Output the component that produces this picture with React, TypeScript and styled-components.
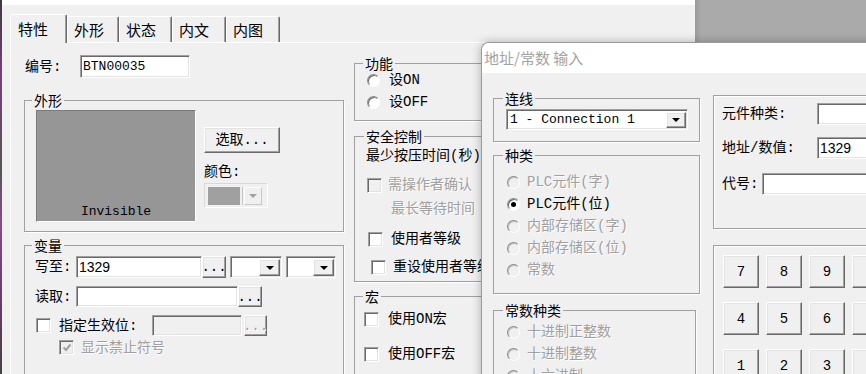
import React from 'react';
import styled, { createGlobalStyle, css } from 'styled-components';

const MONO_CJK = `"Liberation Mono", "Noto Sans CJK SC", monospace`;

const GlobalStyle = createGlobalStyle`
  html, body { margin: 0; padding: 0; background: #f0f0f0; }
  body { font-family: ${MONO_CJK}; font-size: 14px; color: #000; }
  * { box-sizing: border-box; }
`;

const sunken = css`
  border: 1px solid;
  border-color: #a0a0a0 #fff #fff #a0a0a0;
  box-shadow: inset 1px 1px 0 #696969, inset -1px -1px 0 #e3e3e3;
`;

const raised = css`
  border: 1px solid;
  border-color: #fff #696969 #696969 #fff;
  box-shadow: inset -1px -1px 0 #a0a0a0, inset 1px 1px 0 #e3e3e3;
  background: #f0f0f0;
`;

const Screen = styled.div`
  position: relative;
  width: 866px;
  height: 374px;
  overflow: hidden;
  display: flex;
  background: #aaa;
`;

const DesktopEdge = styled.div`
  width: 2px;
  flex: none;
  background: linear-gradient(#3c3c3c, #7a3f7a 20%, #555 45%, #8a4a8a 60%, #6a3a6a 80%, #444);
`;

const Desktop = styled.div`
  flex: 1;
  background: linear-gradient(90deg, #9a9a9a, #aaa 6px);
`;

const BackWindow = styled.div`
  width: 693px;
  flex: none;
  display: flex;
  flex-direction: column;
  background: #f0f0f0;
`;

const TopStrip = styled.div`
  height: 5px;
  flex: none;
  background: #fff;
`;

const TabBar = styled.div`
  height: 37px;
  flex: none;
  display: flex;
  align-items: flex-end;
  padding-left: 8px;
`;

const Tab = styled.div<{ $active?: boolean; $w: number }>`
  position: relative;
  z-index: ${p => (p.$active ? 2 : 1)};
  width: ${p => p.$w}px;
  height: ${p => (p.$active ? 29 : 26)}px;
  margin-bottom: ${p => (p.$active ? -1 : 0)}px;
  padding-left: ${p => (p.$active ? 7 : 6)}px;
  border: 1px solid;
  border-bottom: none;
  border-color: #fff #696969 #fff #fff;
  border-radius: 2px 2px 0 0;
  box-shadow: inset -1px 0 0 #a0a0a0;
  background: #f0f0f0;
  font-family: "Noto Sans CJK SC", sans-serif;
  font-size: 15px;
  line-height: ${p => (p.$active ? 27 : 25)}px;
`;

const Panel = styled.div`
  flex: 1;
  min-height: 0;
  margin-left: 8px;
  border-left: 1px solid #fff;
  border-top: 1px solid #fff;
  padding-left: 13px;
  display: flex;
  gap: 10px;
`;

const LeftCol = styled.div`
  width: 320px;
  flex: none;
  display: flex;
  flex-direction: column;
`;

const RightCol = styled.div`
  flex: 1;
  display: flex;
  flex-direction: column;
`;

const Group = styled.fieldset<{ $w?: number; $mt?: number; $h?: number }>`
  margin: ${p => p.$mt ?? 0}px 0 0 0;
  padding: 0;
  min-width: 0;
  width: ${p => (p.$w ? `${p.$w}px` : 'auto')};
  ${p => p.$h && `height: ${p.$h}px;`}
  flex: none;
  border: 1px solid #a0a0a0;
  box-shadow: 1px 1px 0 #fff;
`;

const Legend = styled.legend<{ $ml?: number }>`
  margin-left: ${p => p.$ml ?? 7}px;
  padding: 0 2px;
  line-height: 16px;
  font-family: "Noto Sans CJK SC", sans-serif;
  font-size: 14px;
`;

const GroupBody = styled.div<{ $pl?: number; $pt?: number; $pb?: number }>`
  display: flex;
  flex-direction: column;
  padding: ${p => p.$pt ?? 0}px 0 ${p => p.$pb ?? 0}px ${p => p.$pl ?? 0}px;
`;

const Row = styled.div<{ $mt?: number; $h?: number; $pl?: number }>`
  display: flex;
  align-items: center;
  margin-top: ${p => p.$mt ?? 0}px;
  height: ${p => p.$h ?? 22}px;
  padding-left: ${p => p.$pl ?? 0}px;
  flex: none;
`;

const Label = styled.span<{ $w?: number; $ml?: number; $disabled?: boolean }>`
  ${p => p.$w && `width: ${p.$w}px;`}
  flex: none;
  margin-left: ${p => p.$ml ?? 0}px;
  white-space: nowrap;
  line-height: 18px;
  color: ${p => (p.$disabled ? '#a0a0a0' : '#000')};
  ${p => p.$disabled && 'text-shadow: 1px 1px 0 #fff;'}
`;

const TextBox = styled.div<{ $w: number; $h: number; $disabled?: boolean; $sans?: boolean }>`
  ${sunken};
  width: ${p => p.$w}px;
  height: ${p => p.$h}px;
  flex: none;
  background: ${p => (p.$disabled ? '#f0f0f0' : '#fff')};
  padding-left: 2px;
  font-family: ${p => (p.$sans ? '"Liberation Sans", sans-serif' : '"Liberation Mono", monospace')};
  font-size: ${p => (p.$sans ? 14 : 13)}px;
  line-height: ${p => p.$h - 2}px;
  white-space: nowrap;
  overflow: hidden;
`;

const PushButton = styled.div<{ $w: number; $h: number; $ml?: number; $disabled?: boolean }>`
  ${raised};
  width: ${p => p.$w}px;
  height: ${p => p.$h}px;
  margin-left: ${p => p.$ml ?? 0}px;
  flex: none;
  display: flex;
  align-items: center;
  justify-content: center;
  color: ${p => (p.$disabled ? '#a0a0a0' : '#000')};
  ${p => p.$disabled && 'text-shadow: 1px 1px 0 #fff;'}
  line-height: 1;
`;

const Combo = styled.div<{ $w: number; $h: number; $ml?: number }>`
  ${sunken};
  width: ${p => p.$w}px;
  height: ${p => p.$h}px;
  margin-left: ${p => p.$ml ?? 0}px;
  flex: none;
  display: flex;
  padding: 2px 1px 1px 2px;
  background: #fff;
`;

const ComboText = styled.div`
  flex: 1;
  padding-left: 1px;
  font-family: "Liberation Mono", monospace;
  font-size: 13px;
  line-height: 15px;
  white-space: nowrap;
`;

const DropButton = styled.div<{ $w?: number; $disabled?: boolean }>`
  ${raised};
  width: ${p => p.$w ?? 19}px;
  flex: none;
  display: flex;
  align-items: center;
  justify-content: center;
  ${p => p.$disabled && 'border-color: #fff #c8c8c8 #c8c8c8 #fff; box-shadow: none;'}
`;

const Arrow = styled.span<{ $disabled?: boolean }>`
  width: 0;
  height: 0;
  border-left: 4px solid transparent;
  border-right: 4px solid transparent;
  border-top: 4px solid ${p => (p.$disabled ? '#a0a0a0' : '#000')};
`;

const ShapeBody = styled.div`
  display: flex;
  gap: 8px;
  padding: 2px 0 9px 11px;
`;

const Preview = styled.div`
  width: 160px;
  height: 112px;
  border: 1px solid;
  border-color: #7a7a7a #fff #fff #7a7a7a;
  background: #969696;
  display: flex;
  align-items: flex-end;
  justify-content: center;
  padding-bottom: 1px;
  font-family: "Liberation Mono", monospace;
  font-size: 13px;
  line-height: 16px;
`;

const ShapeSide = styled.div`
  display: flex;
  flex-direction: column;
  padding-top: 17px;
`;

const SideLabel = styled.div`
  margin-top: 10px;
  line-height: 18px;
`;

const ColorCombo = styled.div`
  width: 64px;
  height: 25px;
  margin-top: 2px;
  border: 1px solid;
  border-color: #d8d8d8 #fff #fff #d8d8d8;
  display: flex;
  padding: 3px 2px 2px 3px;
  gap: 2px;
`;

const Swatch = styled.div`
  width: 34px;
  background: #a0a0a0;
  border-right: 2px solid #f0f0f0;
  box-shadow: 1px 0 0 #c8c8c8;
`;

const Check = styled.span<{ $disabled?: boolean; $ml?: number }>`
  ${sunken};
  width: 15px;
  height: 15px;
  margin-left: ${p => p.$ml ?? 0}px;
  flex: none;
  display: flex;
  align-items: center;
  justify-content: center;
  background: ${p => (p.$disabled ? '#f0f0f0' : '#fff')};
`;

const Radio = styled.span<{ $checked?: boolean; $disabled?: boolean }>`
  position: relative;
  width: 13px;
  height: 13px;
  flex: none;
  border-radius: 50%;
  border: 1px solid;
  border-color: #8a8a8a #fff #fff #8a8a8a;
  box-shadow: inset 1px 1px 0 ${p => (p.$disabled ? '#c4c4c4' : '#696969')};
  background: ${p => (p.$disabled ? '#f0f0f0' : '#fff')};
  &::after {
    content: '';
    display: ${p => (p.$checked ? 'block' : 'none')};
    position: absolute;
    left: 3px;
    top: 3px;
    width: 5px;
    height: 5px;
    border-radius: 50%;
    background: #000;
  }
`;

const Dialog = styled.div`
  position: absolute;
  left: 481px;
  top: 42px;
  width: 400px;
  height: 340px;
  z-index: 5;
  display: flex;
  flex-direction: column;
  border-left: 1px solid #9a9a9a;
  border-top: 1px solid #9a9a9a;
  border-radius: 8px 0 0 0;
  background: #f0f0f0;
  box-shadow: 0 0 10px rgba(0, 0, 0, 0.28);
  overflow: hidden;
`;

const TitleBar = styled.div`
  height: 30px;
  flex: none;
  background: #fff;
  padding-left: 2px;
  font-family: "Noto Sans CJK SC", sans-serif;
  font-size: 15px;
  line-height: 30px;
  color: #a3a3a3;
`;

const DialogBody = styled.div`
  flex: 1;
  min-height: 0;
  display: flex;
  padding: 17px 0 0 11px;
`;

const DialogLeft = styled.div`
  width: 207px;
  flex: none;
  display: flex;
  flex-direction: column;
`;

const DialogRight = styled.div`
  flex: 1;
  margin-left: 13px;
  display: flex;
  flex-direction: column;
`;

const InfoBox = styled.div`
  height: 134px;
  flex: none;
  margin-top: 5px;
  padding-left: 8px;
  border: 1px solid #a0a0a0;
  box-shadow: 1px 1px 0 #fff, inset 1px 1px 0 #fff;
  display: flex;
  flex-direction: column;
`;

const KeyBox = styled.div`
  height: 200px;
  flex: none;
  margin-top: 16px;
  padding: 9px 0 0 9px;
  border: 1px solid #a0a0a0;
  box-shadow: inset 1px 1px 0 #fff;
  display: grid;
  grid-template-columns: repeat(4, 36px);
  grid-template-rows: repeat(3, 33px);
  align-content: start;
  column-gap: 7px;
  row-gap: 14px;
`;

const KeyButton = styled.div`
  ${raised};
  display: flex;
  align-items: center;
  justify-content: center;
  font-family: "Liberation Mono", monospace;
  font-size: 14px;
`;

const TABS = [
  { name: '特性', w: 57 },
  { name: '外形', w: 52 },
  { name: '状态', w: 53 },
  { name: '内文', w: 54 },
  { name: '内图', w: 54 },
];

const KINDS = [
  { name: 'PLC元件(字)', checked: false, disabled: true },
  { name: 'PLC元件(位)', checked: true, disabled: false },
  { name: '内部存储区(字)', checked: false, disabled: true },
  { name: '内部存储区(位)', checked: false, disabled: true },
  { name: '常数', checked: false, disabled: true },
];

const CONST_KINDS = ['十进制正整数', '十进制整数', '十六进制'];

// the fourth column is cut off by the screen edge, its captions are not visible
const KEYS = ['7', '8', '9', '', '4', '5', '6', '', '1', '2', '3', ''];

const CheckMark = () => (
  <svg width="10" height="9" viewBox="0 0 10 9">
    <path d="M1.5 4.5 L4 7 L8.5 1.5" stroke="#a0a0a0" strokeWidth="2" fill="none" />
  </svg>
);

export default function App() {
  return (
    <>
      <GlobalStyle />
      <Screen>
        <DesktopEdge />
        <BackWindow>
          <TopStrip />
          <TabBar>
            {TABS.map((t, i) => (
              <Tab key={t.name} $w={t.w} $active={i === 0}>
                {t.name}
              </Tab>
            ))}
          </TabBar>
          <Panel>
            <LeftCol>
              <Row $mt={12} $h={23}>
                <Label $w={55} $ml={1}>编号:</Label>
                <TextBox $w={110} $h={23}>BTN00035</TextBox>
              </Row>

              <Group $mt={14}>
                <Legend $ml={7}>外形</Legend>
                <ShapeBody>
                  <Preview>Invisible</Preview>
                  <ShapeSide>
                    <PushButton $w={76} $h={26}>选取...</PushButton>
                    <SideLabel>颜色:</SideLabel>
                    <ColorCombo>
                      <Swatch />
                      <DropButton $w={18} $disabled>
                        <Arrow $disabled />
                      </DropButton>
                    </ColorCombo>
                  </ShapeSide>
                </ShapeBody>
              </Group>

              <Group $mt={5} $h={160}>
                <Legend $ml={7}>变量</Legend>
                <GroupBody $pl={10}>
                  <Row $mt={3} $h={22}>
                    <Label $w={41}>写至:</Label>
                    <TextBox $w={126} $h={22} $sans>1329</TextBox>
                    <PushButton $w={24} $h={22}>...</PushButton>
                    <Combo $w={52} $h={22} $ml={4}>
                      <ComboText />
                      <DropButton $w={21}><Arrow /></DropButton>
                    </Combo>
                    <Combo $w={50} $h={22} $ml={4}>
                      <ComboText />
                      <DropButton $w={21}><Arrow /></DropButton>
                    </Combo>
                  </Row>
                  <Row $mt={8} $h={21}>
                    <Label $w={41}>读取:</Label>
                    <TextBox $w={162} $h={21} />
                    <PushButton $w={24} $h={21}>...</PushButton>
                  </Row>
                  <Row $mt={8} $h={21}>
                    <Check $ml={1} />
                    <Label $w={93} $ml={8}>指定生效位:</Label>
                    <TextBox $w={90} $h={21} $disabled />
                    <PushButton $w={23} $h={21} $ml={2} $disabled>...</PushButton>
                  </Row>
                  <Row $mt={4} $h={15} $pl={24}>
                    <Check $disabled>
                      <CheckMark />
                    </Check>
                    <Label $ml={7} $disabled>显示禁止符号</Label>
                  </Row>
                </GroupBody>
              </Group>
            </LeftCol>

            <RightCol>
              <Group $mt={12} $w={200}>
                <Legend $ml={8}>功能</Legend>
                <GroupBody $pl={12} $pb={7}>
                  <Row $mt={-2}>
                    <Radio />
                    <Label $ml={9}>设ON</Label>
                  </Row>
                  <Row>
                    <Radio />
                    <Label $ml={9}>设OFF</Label>
                  </Row>
                </GroupBody>
              </Group>

              <Group $mt={7} $w={200}>
                <Legend $ml={9}>安全控制</Legend>
                <GroupBody $pl={11} $pb={3}>
                  <Row $mt={1}>
                    <Label>最少按压时间(秒)</Label>
                  </Row>
                  <Row $mt={7}>
                    <Check $ml={1} $disabled />
                    <Label $ml={6} $disabled>需操作者确认</Label>
                  </Row>
                  <Row $mt={2} $pl={25}>
                    <Label $disabled>最长等待时间</Label>
                  </Row>
                  <Row $mt={8}>
                    <Check $ml={2} />
                    <Label $ml={8}>使用者等级</Label>
                  </Row>
                  <Row $mt={6}>
                    <Check $ml={5} />
                    <Label $ml={7}>重设使用者等级</Label>
                  </Row>
                </GroupBody>
              </Group>

              <Group $mt={6} $w={200} $h={120}>
                <Legend $ml={8}>宏</Legend>
                <GroupBody $pl={9}>
                  <Row $mt={4}>
                    <Check />
                    <Label $ml={9}>使用ON宏</Label>
                  </Row>
                  <Row $mt={13}>
                    <Check />
                    <Label $ml={9}>使用OFF宏</Label>
                  </Row>
                </GroupBody>
              </Group>
            </RightCol>
          </Panel>
        </BackWindow>
        <Desktop />

        <Dialog>
          <TitleBar>地址/常数 输入</TitleBar>
          <DialogBody>
            <DialogLeft>
              <Group $w={207}>
                <Legend $ml={9}>连线</Legend>
                <GroupBody $pl={12} $pt={3} $pb={11}>
                  <Combo $w={182} $h={21}>
                    <ComboText>1 - Connection 1</ComboText>
                    <DropButton $w={20}><Arrow /></DropButton>
                  </Combo>
                </GroupBody>
              </Group>

              <Group $mt={5} $w={207}>
                <Legend $ml={9}>种类</Legend>
                <GroupBody $pl={13} $pb={12}>
                  {KINDS.map((k, i) => (
                    <Row key={k.name} $mt={i === 0 ? 8 : 0}>
                      <Radio $checked={k.checked} $disabled={k.disabled} />
                      <Label $ml={7} $disabled={k.disabled}>{k.name}</Label>
                    </Row>
                  ))}
                </GroupBody>
              </Group>

              <Group $mt={8} $w={203} $h={120}>
                <Legend $ml={9}>常数种类</Legend>
                <GroupBody $pl={13}>
                  {CONST_KINDS.map((k, i) => (
                    <Row key={k} $mt={i === 0 ? 3 : 0}>
                      <Radio $disabled />
                      <Label $ml={7} $disabled>{k}</Label>
                    </Row>
                  ))}
                </GroupBody>
              </Group>
            </DialogLeft>

            <DialogRight>
              <InfoBox>
                <Row $mt={7}>
                  <Label $w={95}>元件种类:</Label>
                  <TextBox $w={80} $h={22} $sans />
                </Row>
                <Row $mt={12}>
                  <Label $w={95}>地址/数值:</Label>
                  <TextBox $w={80} $h={22} $sans>1329</TextBox>
                </Row>
                <Row $mt={14}>
                  <Label $w={40}>代号:</Label>
                  <TextBox $w={140} $h={22} $sans />
                </Row>
              </InfoBox>
              <KeyBox>
                {KEYS.map((k, i) => (
                  <KeyButton key={i}>{k}</KeyButton>
                ))}
              </KeyBox>
            </DialogRight>
          </DialogBody>
        </Dialog>
      </Screen>
    </>
  );
}
